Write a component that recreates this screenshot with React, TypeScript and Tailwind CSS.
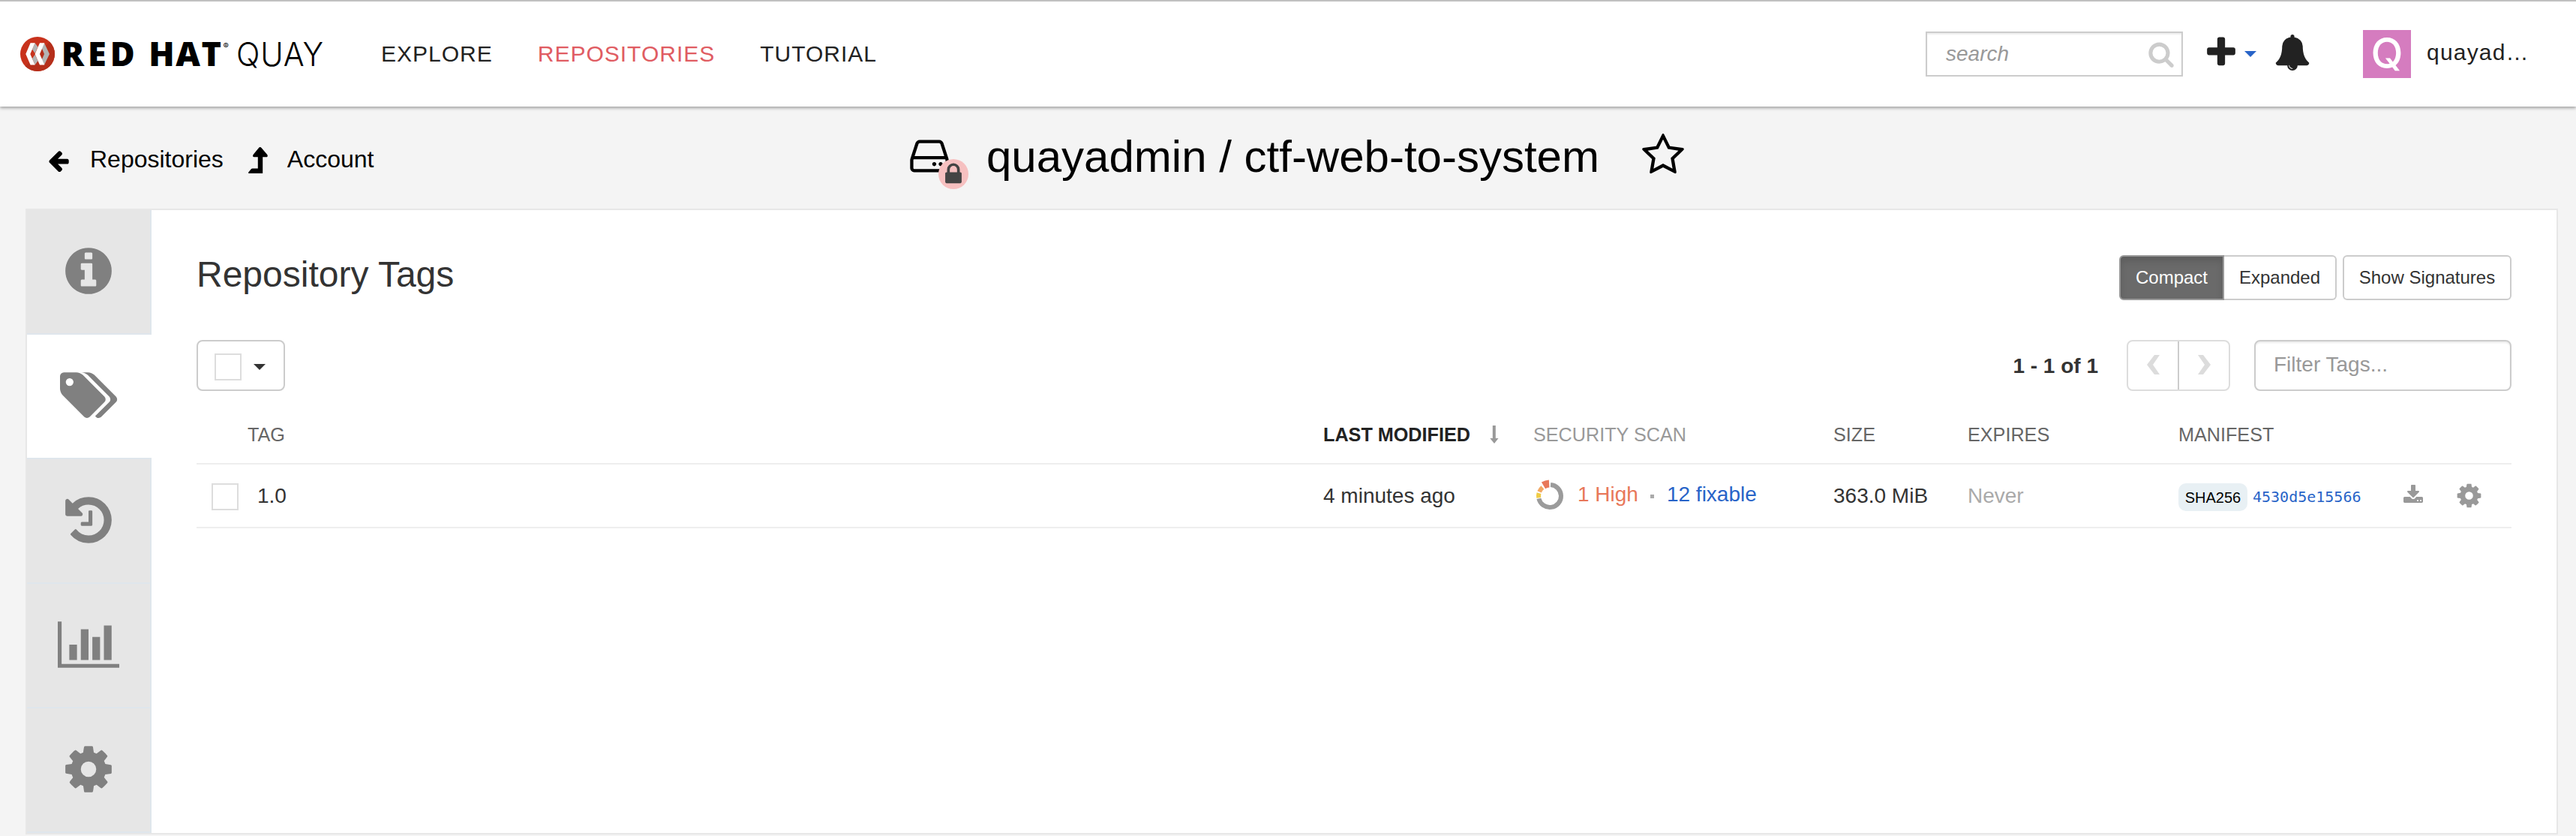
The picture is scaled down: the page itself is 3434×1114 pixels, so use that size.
import type { ReactNode } from "react";

const ICONS = {
  info: "M1152 1376v-160q0-14-9-23t-23-9h-96v-512q0-14-9-23t-23-9h-320q-14 0-23 9t-9 23v160q0 14 9 23t23 9h96v320h-96q-14 0-23 9t-9 23v160q0 14 9 23t23 9h448q14 0 23-9t9-23zm-128-896v-160q0-14-9-23t-23-9h-192q-14 0-23 9t-9 23v160q0 14 9 23t23 9h192q14 0 23-9t9-23zm640 416q0 209-103 385.5t-279.5 279.5-385.5 103-385.5-103-279.5-279.5-103-385.5 103-385.5 279.5-279.5 385.5-103 385.5 103 279.5 279.5 103 385.5z",
  tags: "M448 448q0-53-37.5-90.5t-90.5-37.5-90.5 37.5-37.5 90.5 37.5 90.5 90.5 37.5 90.5-37.5 37.5-90.5zm1067 576q0 53-37 90l-491 492q-39 37-91 37-53 0-90-37l-715-716q-38-37-64.5-101t-26.5-117v-416q0-52 38-90t90-38h416q53 0 117 26.5t102 64.5l715 714q37 39 37 91zm384 0q0 53-37 90l-491 492q-39 37-91 37-36 0-59-14t-53-45l470-470q37-37 37-90 0-52-37-91l-715-714q-38-38-102-64.5t-117-26.5h224q53 0 117 26.5t102 64.5l715 714q37 39 37 91z",
  history: "M1664 896q0 156-61 298t-164 245-245 164-298 61q-172 0-327-72.5t-264-204.5q-7-10-6.5-22.5t8.5-20.5l137-138q10-9 25-9 16 2 23 12 73 95 179 147t225 52q104 0 198.5-40.5t163.5-109.5 109.5-163.5 40.5-198.5-40.5-198.5-109.5-163.5-163.5-109.5-198.5-40.5q-98 0-188 35.5t-160 101.5l137 138q31 30 14 69-17 40-59 40h-448q-26 0-45-19t-19-45v-448q0-42 40-59 39-17 69 14l130 129q107-101 244.5-156.5t284.5-55.5q156 0 298 61t245 164 164 245 61 298zm-640-288v448q0 14-9 23t-23 9h-320q-14 0-23-9t-9-23v-64q0-14 9-23t23-9h224v-352q0-14 9-23t23-9h64q14 0 23 9t9 23z",
  chart: "M640 896v512h-256v-512h256zm384-512v1024h-256v-1024h256zm1024 1152v128h-2048v-1536h128v1408h1920zm-640-896v768h-256v-768h256zm384-384v1152h-256v-1152h256z",
  cog: "M1152 896q0-106-75-181t-181-75-181 75-75 181 75 181 181 75 181-75 75-181zm512-109v222q0 12-8 23t-20 13l-185 28q-19 54-39 91 35 50 107 138 10 12 10 25t-9 23q-27 37-99 108t-94 71q-12 0-26-9l-138-108q-44 23-91 38-16 136-29 186-7 28-36 28h-222q-14 0-24.5-8.5t-11.5-21.5l-28-184q-49-16-90-37l-141 107q-10 9-25 9-14 0-25-11-126-114-165-168-7-10-7-23 0-12 8-23 15-21 51-66.5t54-70.5q-27-50-41-99l-183-27q-13-2-21-12.5t-8-23.5v-222q0-12 8-23t19-13l186-28q14-46 39-92-40-57-107-138-10-12-10-24 0-10 9-23 26-36 98.5-107.5t94.5-71.5q13 0 26 10l138 107q44-23 91-38 16-136 29-186 7-28 36-28h222q14 0 24.5 8.5t11.5 21.5l28 184q49 16 90 37l142-107q9-9 24-9 13 0 25 10 129 119 165 170 7 8 7 22 0 12-8 23-15 21-51 66.5t-54 70.5q26 50 41 98l183 28q13 2 21 12.5t8 23.5z",
  bell: "M912 1696q0-16-16-16-59 0-101.5-42.5t-42.5-101.5q0-16-16-16t-16 16q0 73 51.5 124.5t124.5 51.5q16 0 16-16zm816-288q0 52-38 90t-90 38h-448q0 106-75 181t-181 75-181-75-75-181h-448q-52 0-90-38t-38-90q50-42 91-88t85-119.5 74.5-158.5 50-206 19.5-260q0-152 117-282.5t307-158.5q-8-19-8-39 0-40 28-68t68-28 68 28 28 68q0 20-8 39 190 28 307 158.5t117 282.5q0 139 19.5 260t50 206 74.5 158.5 85 119.5 91 88z",
  plus: "M1600 736v192q0 40-28 68t-68 28h-416v416q0 40-28 68t-68 28h-192q-40 0-68-28t-28-68v-416h-416q-40 0-68-28t-28-68v-192q0-40 28-68t68-28h416v-416q0-40 28-68t68-28h192q40 0 68 28t28 68v416h416q40 0 68 28t28 68z",
  search: "M1216 832q0-185-131.5-316.5t-316.5-131.5-316.5 131.5-131.5 316.5 131.5 316.5 316.5 131.5 316.5-131.5 131.5-316.5zm512 832q0 52-38 90t-90 38q-54 0-90-38l-343-342q-179 124-399 124-143 0-273.5-55.5t-225-150-150-225-55.5-273.5 55.5-273.5 150-225 225-150 273.5-55.5 273.5 55.5 225 150 150 225 55.5 273.5q0 220-124 399l343 343q37 37 37 90z",
  lock: "M640 768h512v-192q0-106-75-181t-181-75-181 75-75 181v192zm832 96v576q0 40-28 68t-68 28h-960q-40 0-68-28t-28-68v-576q0-40 28-68t68-28h32v-192q0-184 132-316t316-132 316 132 132 316v192h32q40 0 68 28t28 68z",
  hdd: "M1168 1216q0 33-23.5 56.5t-56.5 23.5-56.5-23.5-23.5-56.5 23.5-56.5 56.5-23.5 56.5 23.5 23.5 56.5zm256 0q0 33-23.5 56.5t-56.5 23.5-56.5-23.5-23.5-56.5 23.5-56.5 56.5-23.5 56.5 23.5 23.5 56.5zm112 160v-320q0-13-9.5-22.5t-22.5-9.5h-1216q-13 0-22.5 9.5t-9.5 22.5v320q0 13 9.5 22.5t22.5 9.5h1216q13 0 22.5-9.5t9.5-22.5zm-1230-480h1180l-157-482q-4-13-16-21.5t-26-8.5h-782q-14 0-26 8.5t-16 21.5zm1358 160v320q0 66-47 113t-113 47h-1216q-66 0-113-47t-47-113v-320q0-25 16-75l197-606q17-53 63-86t101-33h782q55 0 101 33t63 86l197 606q16 50 16 75z",
  star: "M1201 1004l306-297-422-62-189-382-189 382-422 62 306 297-73 421 378-199 377 199zm527-357q0 22-26 48l-363 354 86 500q1 7 1 20 0 50-41 50-19 0-40-12l-449-236-449 236q-22 12-40 12-21 0-31.5-14.5t-10.5-35.5q0-6 2-20l86-500-364-354q-25-27-25-48 0-37 56-46l502-73 225-455q19-41 49-41t49 41l225 455 502 73q56 9 56 46z",
  arrowLeft: "M1664 896v128q0 53-32.5 90.5t-84.5 37.5h-704l293 294q38 36 38 90t-38 90l-75 76q-37 37-90 37-52 0-91-37l-651-652q-37-37-37-90 0-52 37-91l651-650q38-38 91-38 52 0 90 38l75 74q38 38 38 91t-38 91l-293 293h704q52 0 84.5 37.5t32.5 90.5z",
  download: "M1344 1344q0-26-19-45t-45-19-45 19-19 45 19 45 45 19 45-19 19-45zm256 0q0-26-19-45t-45-19-45 19-19 45 19 45 45 19 45-19 19-45zm128-224v320q0 40-28 68t-68 28h-1472q-40 0-68-28t-28-68v-320q0-40 28-68t68-28h465l135 136q58 56 136 56t136-56l136-136h464q40 0 68 28t28 68zm-325-569q17 41-14 70l-448 448q-18 19-45 19t-45-19l-448-448q-31-29-14-70 17-39 59-39h256v-448q0-26 19-45t45-19h256q26 0 45 19t19 45v448h256q42 0 59 39z",
};

function Icon({ name, width = 1792, className }: { name: keyof typeof ICONS; width?: number; className: string }) {
  return (
    <svg viewBox={`0 0 ${width} 1792`} fill="currentColor" className={`block shrink-0 ${className}`}>
      <path d={ICONS[name]} />
    </svg>
  );
}

function Logo() {
  return (
    <svg viewBox="0 0 410 60" className="ml-[27px] block h-[60px] w-[410px] shrink-0">
      <circle cx="23" cy="30" r="23" fill="#c8321c" />
      <path d="M39.3 13.7A23 23 0 0 1 6.7 46.3Z" fill="#b52f1b" />
      <path d="M19.600 15.300L23.500 20.500L19.600 29L16 23.700Z" fill="#b4b4b4" />
      <path d="M19.600 44.400L23.500 39.200L19.600 30.700L16 36Z" fill="#b4b4b4" />
      <path d="M13.600 15.300H19.600L13.300 30L19.600 44.400H13.600L7.300 30Z" fill="#fff" />
      <path d="M32 15.300L39 30L32 44.400L28.500 38L32 30L28.500 21.500Z" fill="#b4b4b4" />
      <path d="M26 15.300H32.300L26 30L32.300 44.400H26L19.600 30Z" fill="#fff" />
      <g fill="#000" fontFamily="'Open Sans', 'Liberation Sans', sans-serif" fontSize="45">
        <text x="54.700" y="46" fontWeight="800" textLength="99" lengthAdjust="spacing">RED</text>
        <text x="171.300" y="46" fontWeight="800" textLength="97.700" lengthAdjust="spacing">HAT</text>
      </g>
      <g fill="#000" fontFamily="Inter, 'Liberation Sans', sans-serif">
        <text x="270.500" y="22.500" fontSize="11">®</text>
        <text x="288" y="46" fontSize="44" fontWeight="300" textLength="117" lengthAdjust="spacingAndGlyphs">QUAY</text>
      </g>
    </svg>
  );
}

function Header() {
  return (
    <header className="relative z-10 flex h-[142px] items-center border-t-2 border-[#c0c0c0] bg-white text-[30px] tracking-[1px] text-[#222] shadow-[0_2px_4px_rgba(0,0,0,0.35)]">
      <Logo />
      <nav className="ml-[71px] flex gap-[60px] leading-[36px]">
        <a>EXPLORE</a>
        <a className="text-[#e05c62]">REPOSITORIES</a>
        <a>TUTORIAL</a>
      </nav>
      <div className="ml-auto flex items-center">
        <div className="flex h-[60px] w-[343px] items-center justify-between border-2 border-[#ccc] pr-[9px] pl-[25px] text-[28px] tracking-normal text-[#999] italic shadow-[inset_0_2px_2px_rgba(0,0,0,0.075)]">
          <span className="leading-[36px]">search</span>
          <Icon name="search" className="h-9 w-9 text-[#ccc]" />
        </div>
        <Icon name="plus" className="mb-[5px] ml-[27px] h-12 w-12" />
        <svg viewBox="0 0 16 8" className="ml-[7px] block h-2 w-4">
          <path d="M0 0H16L8 8Z" fill="#2864c8" />
        </svg>
        <Icon name="bell" className="mb-1 ml-6 h-12 w-12" />
        <div className="ml-[70px] flex h-16 w-16 items-center justify-center bg-[#d57cbf] font-['Inter',sans-serif] text-[56px] leading-[62px] font-medium tracking-normal text-white">
          <span className="-mt-[3px] block">Q</span>
        </div>
        <span className="mr-[64px] mb-1 ml-[21px] w-[135px] leading-[36px] tracking-[1.2px] whitespace-nowrap">quayad…</span>
      </div>
    </header>
  );
}

function TitleBar() {
  return (
    <div className="flex h-[136px] items-center text-[32px] text-black">
      <div className="flex w-[1209px] items-center pl-[62px]">
        <Icon name="arrowLeft" className="mt-2 h-8 w-8" />
        <span className="mt-[3px] ml-[26px] leading-10">Repositories</span>
        <svg viewBox="0 0 26 35" className="mt-[7px] ml-[33px] block h-[35px] w-[26px]">
          <path d="M15.700 0Q16.800 0 17.500 1L25 9.800Q26.300 11.600 25.400 12.800Q25 13.300 23.800 13.300H19.200V35H.8Q-.4 34.600.3 33.500L4 29Q4.600 28.400 5.600 28.400H12.800V13.300H7.800Q6.500 13.300 6.200 12.500Q5.800 11.300 6.800 9.800L14 1Q14.800 0 15.700 0Z" />
        </svg>
        <span className="mt-[3px] ml-[26px] leading-10">Account</span>
      </div>
      <div className="relative mr-[45px] mb-[5px] shrink-0">
        <Icon name="hdd" className="h-[60px] w-[60px]" />
        <span className="absolute top-[34px] left-[42px] flex h-10 w-10 items-center justify-center rounded-full bg-[#f6c0c0]">
          <Icon name="lock" className="h-[34px] w-[34px] text-[#444]" />
        </span>
      </div>
      <h1 className="mb-[3px] ml-px text-[60px] leading-[72px] whitespace-nowrap">quayadmin / ctf-web-to-system</h1>
      <Icon name="star" className="mb-[6px] ml-[55px] h-[60px] w-[60px]" />
    </div>
  );
}

function Tab({ active, children }: { active?: boolean; children: ReactNode }) {
  return (
    <div
      className={`flex h-[166px] justify-center border-b-2 border-[#dfe6ec] pt-[45px] text-[#808080] ${
        active ? "bg-white pr-[2px]" : "border-r-2 bg-[#e6e6e6]"
      }`}
    >
      {children}
    </div>
  );
}

function Sidebar() {
  return (
    <aside className="w-[166px] shrink-0">
      <Tab><Icon name="info" className="h-[72px] w-[72px]" /></Tab>
      <Tab active><Icon name="tags" width={1920} className="h-[72px] w-[77px]" /></Tab>
      <Tab><Icon name="history" className="h-[72px] w-[72px]" /></Tab>
      <Tab><Icon name="chart" width={2048} className="h-[72px] w-[82px]" /></Tab>
      <Tab><Icon name="cog" className="h-[72px] w-[72px]" /></Tab>
    </aside>
  );
}

function Toolbar() {
  return (
    <div className="mt-[53px] flex h-[68px] items-center text-[28px]">
      <div className="flex h-[68px] w-[118px] items-center rounded-lg border-2 border-[#ccc] pl-[22px]">
        <span className="mt-1 h-9 w-9 border-2 border-[#ddd]" />
        <svg viewBox="0 0 16 8" className="mt-1 ml-4 block h-2 w-4">
          <path d="M0 0H16L8 8Z" fill="#333" />
        </svg>
      </div>
      <b className="mt-[2px] mr-[38px] ml-auto leading-9">1 - 1 of 1</b>
      <div className="flex h-[68px] w-[138px] rounded-lg border-2 border-[#ddd] text-[#dcdcdc]">
        <div className="flex flex-1 items-center justify-center border-r-2 border-[#ccc]">
          <svg viewBox="0 0 17 26" className="mb-[2px] block h-[26px] w-[17px]" fill="currentColor">
            <path d="M10 0H17L8 13L17 26H10L0 13Z" />
          </svg>
        </div>
        <div className="flex flex-1 items-center justify-center">
          <svg viewBox="0 0 17 26" className="mb-[2px] block h-[26px] w-[17px]" fill="currentColor">
            <path d="M7 0H0L9 13L0 26H7L17 13Z" />
          </svg>
        </div>
      </div>
      <div className="ml-8 flex h-[68px] w-[343px] items-center rounded-lg border-2 border-[#ccc] pl-6 text-[#999] shadow-[inset_0_2px_2px_rgba(0,0,0,0.075)]">
        <span className="mb-[2px] leading-9">Filter Tags...</span>
      </div>
    </div>
  );
}

const COLS = "grid grid-cols-[1502px_280px_400px_179px_281px_444px] items-center";

/** Ring segment running clockwise between two angles measured from the top. */
function arc(from: number, to: number, inner: number, outer: number) {
  const pt = (deg: number, r: number) => {
    const a = (deg * Math.PI) / 180;
    return `${(22 + r * Math.sin(a)).toFixed(2)} ${(22 - r * Math.cos(a)).toFixed(2)}`;
  };
  const large = to - from > 180 ? 1 : 0;
  return `M${pt(from, outer)}A${outer} ${outer} 0 ${large} 1 ${pt(to, outer)}L${pt(to, inner)}A${inner} ${inner} 0 ${large} 0 ${pt(from, inner)}Z`;
}

function TagTable() {
  return (
    <div className="mt-5">
      <div className={`${COLS} h-[78px] border-b-2 border-[#eee] text-[25.2px] leading-[30px] text-[#666]`}>
        <span className="pl-[68px]">TAG</span>
        <span className="flex items-center font-bold text-[#222]">
          LAST MODIFIED
          <svg viewBox="0 0 12 24" className="ml-[26px] block h-6 w-3" fill="#999">
            <path d="M3.800 0H7.800V17H11.500L6 24L.3 17H3.800Z" />
          </svg>
        </span>
        <span className="text-[#999]">SECURITY SCAN</span>
        <span>SIZE</span>
        <span>EXPIRES</span>
        <span>MANIFEST</span>
      </div>
      <div className={`${COLS} h-[85px] border-b-2 border-[#eee] text-[28px] leading-9 text-[#333]`}>
        <span className="flex items-center pl-5">
          <span className="mt-[2px] mr-[25px] h-9 w-9 border-2 border-[#ddd]" />
          1.0
        </span>
        <span>4 minutes ago</span>
        <span className="-mt-[3px] flex items-center">
          <svg viewBox="0 0 44 44" className="mt-[3px] block h-11 w-11">
            <path d={arc(4, 257, 12, 18)} fill="#9b9b9b" />
            <path d={arc(261, 285, 12, 18)} fill="#f0cc45" />
            <path d={arc(292, 320, 12, 18)} fill="#f2a864" />
            <path d={arc(329, 357, 11.5, 21.5)} fill="#e8785a" />
          </svg>
          <span className="ml-[15px] text-[#e8785a]">1 High</span>
          <span className="mr-[17px] ml-[16px] mt-1 h-[5px] w-[5px] bg-[#aaa]" />
          <span className="text-[#2864c8]">12 fixable</span>
        </span>
        <span>363.0 MiB</span>
        <span className="text-[#aaa]">Never</span>
        <span className="flex items-center">
          <span className="mt-1 flex h-[37px] w-[92px] items-center justify-center rounded-[10px] bg-[#e8f0f4] text-[20px] leading-6 text-black">
            SHA256
          </span>
          <span className="mt-[2px] ml-[7px] font-['DejaVu_Sans_Mono',monospace] text-[20px] leading-6 text-[#2864c8]">4530d5e15566</span>
          <Icon name="download" className="mb-[1px] ml-[55px] h-7 w-7 text-[#999]" />
          <Icon name="cog" className="ml-[42px] h-[37px] w-[37px] text-[#999]" />
        </span>
      </div>
    </div>
  );
}

export default function App() {
  return (
    <div className="h-[1114px] w-[3434px] overflow-hidden bg-[#f4f4f4] font-['Liberation_Sans',Arial,sans-serif]">
      <Header />
      <TitleBar />
      <main className="ml-[34px] flex h-[834px] w-[3376px] border-2 border-[#e7e7e7] bg-white text-[#333]">
        <Sidebar />
        <section className="flex-1 pr-[60px] pl-[60px]">
          <div className="flex pt-[60px]">
            <h2 className="-mt-[2px] h-[60px] text-[48px] leading-[56px]">Repository Tags</h2>
            <div className="ml-auto flex text-[24px] leading-[56px]">
              <span className="h-[60px] w-[140px] rounded-l-md border-2 border-[#999] bg-[#6a6a6a] text-center text-white shadow-[inset_0_6px_10px_rgba(0,0,0,0.125)]">
                Compact
              </span>
              <span className="h-[60px] w-[150px] rounded-r-md border-2 border-l-0 border-[#ccc] text-center">Expanded</span>
              <span className="ml-2 h-[60px] w-[225px] rounded-md border-2 border-[#ccc] text-center">Show Signatures</span>
            </div>
          </div>
          <Toolbar />
          <TagTable />
        </section>
      </main>
    </div>
  );
}
